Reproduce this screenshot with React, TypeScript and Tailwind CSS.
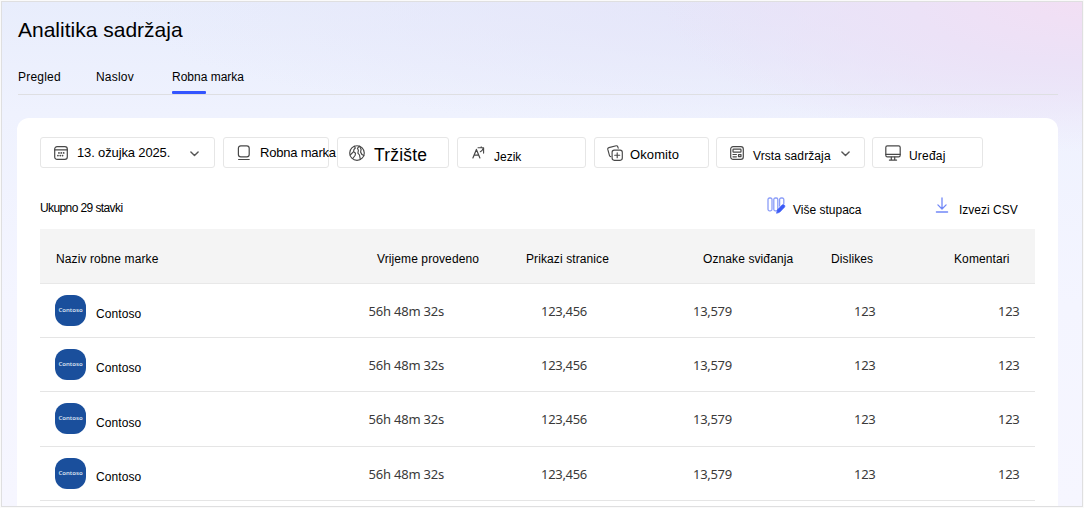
import React from 'react';

const iconProps = {
  fill: 'none',
  stroke: 'currentColor',
  strokeWidth: 1.2,
  strokeLinecap: 'round' as const,
  strokeLinejoin: 'round' as const,
};

const CalendarIcon = () => (
  <svg width="14" height="14" viewBox="0 0 14 14" {...iconProps}>
    <rect x="0.7" y="0.7" width="12.6" height="12.6" rx="2.4" />
    <path d="M0.7 3.8h12.6" />
    <path d="M4.9 6.9h.1M7.2 6.9h.1M9.6 6.9h.1M3.9 9.6h.1M6.2 9.6h.1M8.5 9.6h.1" strokeWidth="1.7" />
  </svg>
);

const BrandIcon = () => (
  <svg width="14" height="16" viewBox="0 0 14 16" {...iconProps}>
    <rect x="1.4" y="0.8" width="10.8" height="11" rx="2.4" />
    <path d="M1.6 14.5h10.6" />
  </svg>
);

const GlobeIcon = () => (
  <svg width="16" height="16" viewBox="0 0 16 16" {...iconProps} strokeWidth={1.15}>
    <circle cx="8" cy="8" r="7.3" />
    <path d="M5.4 1.3 6.3 3 4.9 4.6 4.6 6.6 1.2 10M4.6 6.6l1.9 1.7-.4 2.2-2.4 3M10.3 1.2 8.4 3.3l1 1.9-.5 2.9 1.6 1.9.8 4.4M10.7 1.5l1.4 2.8-.5 2.8 1.4 2.5 1.8 1" />
  </svg>
);

const LanguageIcon = () => (
  <svg width="13" height="13" viewBox="0 0 13 13" {...iconProps}>
    <path d="M0.9 12 4.4 3.4 7.9 12M2.1 9.2h4.6" />
    <path d="M6 1.7h5.6v5.4M9.2.7v1M11.4 1.9C10.9 3.7 9.8 5 8.3 5.7" strokeWidth="1.1" />
  </svg>
);

const VerticalIcon = () => (
  <svg width="16" height="16" viewBox="0 0 16 16" {...iconProps} strokeWidth={1.15}>
    <rect x="5.1" y="5.1" width="10.2" height="10.2" rx="2.2" />
    <path d="M10.2 7.7v5M7.7 10.2h5" />
    <path d="M11.2 3.2 10.8 1.8A1.3 1.3 0 0 0 9.2.8L1.9 2.6A1.5 1.5 0 0 0 .8 4.4l1.7 6.2c.2.7.7 1 1.3 1" />
  </svg>
);

const ContentIcon = () => (
  <svg width="14" height="14" viewBox="0 0 14 14" {...iconProps}>
    <rect x="0.7" y="0.7" width="12.6" height="12.6" rx="2.4" />
    <rect x="3" y="3.2" width="8" height="2.9" rx="0.6" />
    <path d="M3 8.5h3.4M3 10.8h3.4M8.5 8.6H11v2H8.5z" />
  </svg>
);

const DeviceIcon = () => (
  <svg width="16" height="16" viewBox="0 0 16 16" {...iconProps}>
    <rect x="0.8" y="0.8" width="14.4" height="11" rx="1.6" />
    <path d="M0.9 9.4h14.2M6.3 12v3M9.7 12v3M4.4 15.1h7.2" />
  </svg>
);

const ChevronIcon = () => (
  <svg width="9" height="6" viewBox="0 0 9 6" {...iconProps} strokeWidth={1.4}>
    <path d="M0.9 0.9 4.5 4.5 8.1 0.9" />
  </svg>
);

const ColumnsIcon = () => (
  <svg width="19" height="17" viewBox="0 0 19 17" {...iconProps} stroke="#8b9df8" strokeWidth={1.3}>
    <rect x="1" y="1" width="4" height="12.8" rx="1.5" />
    <rect x="6.8" y="1" width="4" height="12.8" rx="1.5" />
    <path d="M12.6 9V2.5A1.5 1.5 0 0 1 14.1 1h1.2a1.5 1.5 0 0 1 1.5 1.5v4.3" />
    <path d="M9.7 15.9 10.6 12.8 15.1 8.1c1.5-1.4 3.6.6 2.3 2.1L12.8 15z" fill="#3b5bf6" stroke="#3b5bf6" strokeWidth=".8" />
  </svg>
);

const DownloadIcon = () => (
  <svg width="14" height="17" viewBox="0 0 14 17" {...iconProps} stroke="#7188f7" strokeWidth={1.3}>
    <path d="M7 .9v10.8M2.9 7.9 7 12l4.1-4.1M1.4 15h11.2" />
  </svg>
);

const filters = [
  { label: '13. ožujka 2025.', icon: CalendarIcon, box: 'w-[175px] mr-[8px]', iconBox: 'ml-[13px] mt-[8px]', text: 'ml-[9px] mt-[8px] text-[13px] leading-[13px] tracking-[-0.14px]', chevron: 'ml-[20px] mt-[13px]' },
  { label: 'Robna marka', icon: BrandIcon, box: 'w-[106px] mr-[8px]', iconBox: 'ml-[13px] mt-[7px]', text: 'ml-[9px] mt-[8px] text-[13px] leading-[13px] tracking-[-0.2px] relative z-10' },
  { label: 'Tržište', icon: GlobeIcon, box: 'w-[112px] mr-[8px]', iconBox: 'ml-[11px] mt-[7px]', text: 'ml-[9px] mt-[8px] text-[17.5px] leading-[18px] tracking-[0.2px]' },
  { label: 'Jezik', icon: LanguageIcon, box: 'w-[129px] mr-[8px]', iconBox: 'ml-[14px] mt-[8px]', text: 'ml-[9px] mt-[13px] text-[12px] leading-[12px]' },
  { label: 'Okomito', icon: VerticalIcon, box: 'w-[115px] mr-[7px]', iconBox: 'ml-[12px] mt-[7px]', text: 'ml-[7px] mt-[10px] text-[13px] leading-[13px] tracking-[0.1px]' },
  { label: 'Vrsta sadržaja', icon: ContentIcon, box: 'w-[149px] mr-[7px]', iconBox: 'ml-[13px] mt-[8px]', text: 'ml-[9px] mt-[12px] text-[12px] leading-[12px] tracking-[0.1px]', chevron: 'ml-[10px] mt-[13px]' },
  { label: 'Uređaj', icon: DeviceIcon, box: 'w-[111px]', iconBox: 'ml-[12px] mt-[7px]', text: 'ml-[8px] mt-[12px] text-[12px] leading-[12px] tracking-[0.2px]' },
];

const columns = [
  { title: 'Naziv robne marke', pad: 'pl-4' },
  { title: 'Vrijeme provedeno', pad: 'pl-[9px]' },
  { title: 'Prikazi stranice', pad: '' },
  { title: 'Oznake sviđanja', pad: 'pl-[10px]' },
  { title: 'Dislikes', pad: '' },
  { title: 'Komentari', pad: '' },
];

const rows = [1, 2, 3, 4].map((id) => ({
  id,
  brand: 'Contoso',
  time: '56h 48m 32s',
  views: '123,456',
  likes: '13,579',
  dislikes: '123',
  comments: '123',
}));

const grid = 'grid grid-cols-[328px_158px_167px_138px_123px_81px]';

const App = () => {
  return (
    <div className="w-[1084px] h-[508px] p-px bg-[#fafafa] overflow-hidden font-['Liberation_Sans',Arial,sans-serif] text-black text-[12px]">
      <div className="w-[1082px] h-[506px] border border-[#dfdfe0] overflow-hidden bg-[radial-gradient(ellipse_420px_150px_at_100%_0%,#f2dff4_0%,#ece2f7_40%,#eae4f800_100%),radial-gradient(ellipse_700px_130px_at_75%_0%,#e5e5f9_0%,#e5e5f900_100%),linear-gradient(180deg,#e8edfc_0%,#eff2fe_22%,#f4f5ff_60%,#f6f6ff_100%)]">
        <h1 className="pt-[17px] pl-4 text-[21px] leading-[21px] whitespace-nowrap">Analitika sadržaja</h1>

        {/* Tabs */}
        <nav className="ml-4 mt-[31px] w-[1040px] h-[24px] flex border-b border-[#dedfe2] leading-[12px] whitespace-nowrap">
          <span className="w-[78px] tracking-[0.2px]">Pregled</span>
          <span className="w-[76px] tracking-[0.2px]">Naslov</span>
          <div className="flex flex-col justify-between">
            <span>Robna marka</span>
            <div className="w-[34px] h-[3px] rounded-[1px] bg-[#3355ff]" />
          </div>
        </nav>

        <main className="ml-[15px] mt-[23px] w-[1041px] h-[400px] rounded-t-[12px] bg-white px-[23px] pt-[19px]">
          {/* Filters */}
          <div className="flex h-[31px]">
            {filters.map((f) => (
              <button key={f.label} className={`${f.box} shrink-0 h-[31px] flex items-start border border-[#e6e6e6] rounded-[3px] whitespace-nowrap`}>
                <span className={`${f.iconBox} shrink-0 text-[#484848]`}>
                  <f.icon />
                </span>
                <span className={f.text}>{f.label}</span>
                {f.chevron && (
                  <span className={`${f.chevron} shrink-0 text-[#555]`}>
                    <ChevronIcon />
                  </span>
                )}
              </button>
            ))}
          </div>

          {/* Summary and actions */}
          <div className="flex h-[61px] pt-[29px] leading-[12px] whitespace-nowrap">
            <span className="w-[727px] mt-[5px] tracking-[-0.6px]">Ukupno 29 stavki</span>
            <button className="flex w-[168px] items-start">
              <ColumnsIcon />
              <span className="ml-[7px] mt-[7px]">Više stupaca</span>
            </button>
            <button className="flex items-start">
              <DownloadIcon />
              <span className="ml-[10px] mt-[7px]">Izvezi CSV</span>
            </button>
          </div>

          {/* Table */}
          <div className="w-[995px]">
            <div className={`${grid} h-[54.6px] pt-[24px] bg-[#f4f4f4] border-b border-[#e8e8e8] leading-[12px] tracking-[0.1px] whitespace-nowrap`}>
              {columns.map((c) => (
                <span key={c.title} className={c.pad}>{c.title}</span>
              ))}
            </div>
            {rows.map((row) => (
              <div key={row.id} className={`${grid} h-[54.4px] pt-[11px] border-b border-[#e5e5e5] whitespace-nowrap`}>
                <div className="flex pl-[15px]">
                  <div className="w-[31px] h-[31px] rounded-[12px] bg-[#1a4f9c] flex items-center justify-center font-['Noto_Sans',sans-serif] font-semibold text-[6px] text-[#d5e0f0]">
                    {row.brand}
                  </div>
                  <span className="ml-[10px] mt-[13.4px] leading-[12px] tracking-[0.1px]">{row.brand}</span>
                </div>
                <div className="contents font-['Noto_Sans',sans-serif] text-[13px] leading-[33px] tracking-[-0.3px] text-[#3a3a3a]">
                  <span className="pl-[0.5px] tracking-[-0.2px]">{row.time}</span>
                  <span className="pl-[15px]">{row.views}</span>
                  <span>{row.likes}</span>
                  <span className="pl-[23px]">{row.dislikes}</span>
                  <span className="pl-[44px]">{row.comments}</span>
                </div>
              </div>
            ))}
          </div>
        </main>
      </div>
    </div>
  );
};

export default App;
